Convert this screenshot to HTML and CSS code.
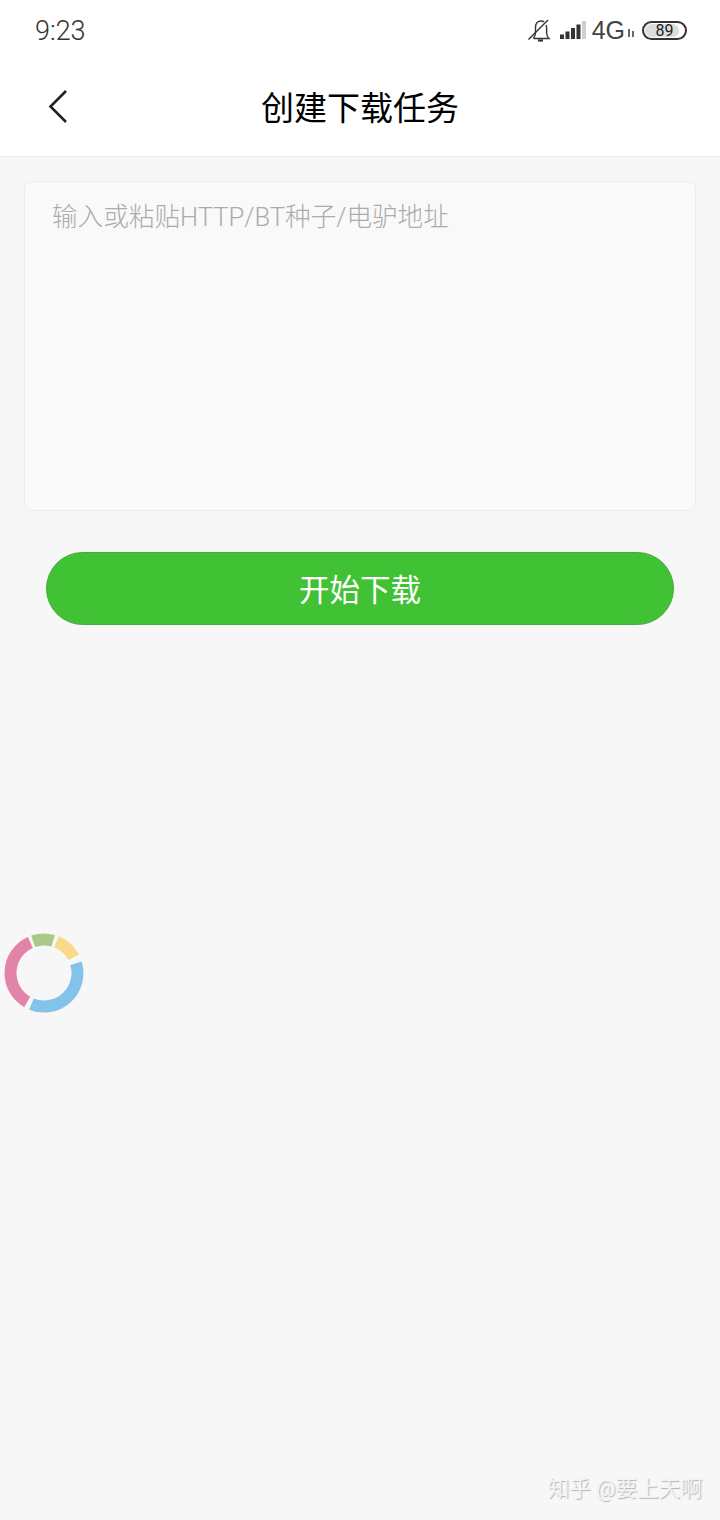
FILE: index.html
```html
<!DOCTYPE html>
<html lang="zh-CN">
<head>
  <meta charset="UTF-8" />
  <meta name="viewport" content="width=device-width, initial-scale=1.0"/>
  <title>创建下载任务</title>
  <link rel="stylesheet" href="styles.css">
</head>
<body>
  <div class="top">
    <!-- Status bar -->
    <div class="status-bar">
      <span class="clock">9:23</span>
      <div class="status-icons">
        <svg class="bell" width="26" height="24" viewBox="0 0 26 24" fill="none" stroke="#333" stroke-width="1.4">
          <path d="M6 20.500c1.800-1.500 2.500-3 2.500-6V9.500C8.500 5.500 10.500 3 14 3c1.200 0 2.200.3 3 .9M19 7c.5 1 .6 1.800.6 3v4.500c0 2.500.8 4.500 2.400 6H7"/>
          <path d="M1.500 21.500L21 2"/>
          <path d="M11 22.500h5" stroke-width="2.200"/>
        </svg>
        <svg class="signal" width="27" height="18" viewBox="0 0 27 18">
          <rect x="0" y="13.500" width="4" height="4.500" fill="#333"/>
          <rect x="5.500" y="10.500" width="4" height="7.500" fill="#333"/>
          <rect x="11" y="7" width="4" height="11" fill="#333"/>
          <rect x="16.500" y="3.500" width="4" height="14.500" fill="#333"/>
          <rect x="22" y="0" width="4" height="18" fill="#d0d0d0"/>
        </svg>
        <span class="network">4G</span>
        <svg class="arrows" width="8" height="10" viewBox="0 0 8 10" fill="none" stroke="#444" stroke-width="1.600">
          <path d="M2 1v8M6 3v6"/>
        </svg>
        <div class="battery"><div class="battery-fill"></div><span class="battery-num">89</span></div>
      </div>
    </div>

    <!-- Title bar -->
    <div class="title-bar">
      <svg class="back" width="24" height="36" viewBox="0 0 24 36" fill="none" stroke="#222" stroke-width="2.600">
        <path d="M20 3L4.500 18.500L20 34"/>
      </svg>
      <h1>创建下载任务</h1>
    </div>
  </div>

  <div class="content">
    <div class="url-box">
      <span class="placeholder">输入或粘贴HTTP/BT种子/电驴地址</span>
    </div>
    <button class="start-button"><span class="start-label">开始下载</span></button>
  </div>

  <!-- Floating ball -->
  <svg class="float-ring" width="88" height="88" viewBox="0 0 88 88" fill="none" stroke-width="12">
    <path stroke="#a9c98b" d="M33.100 12.300A33.500 33.500 0 0 1 53.200 11.800"/>
    <path stroke="#fbd98c" d="M56.500 12.900A33.500 33.500 0 0 1 73.600 28.300"/>
    <path stroke="#83c3ea" d="M76 34.200A33.500 33.500 0 0 1 31.400 75.100"/>
    <path stroke="#e184a8" d="M27.200 73A33.500 33.500 0 0 1 30.400 13.400"/>
  </svg>

  <div class="watermark">知乎 @要上天啊</div>
</body>
</html>
```

FILE: styles.css
```css
* {
  box-sizing: border-box;
}

body {
  font-family: 'Roboto', 'Noto Sans CJK SC', sans-serif;
  background-color: #f7f7f7;
  margin: 0;
  height: 1520px;
  position: relative;
  overflow: hidden;
}

.top {
  background-color: #fff;
  border-bottom: 1px solid #ebebeb;
  height: 157px;
}

.status-bar {
  height: 60px;
  display: flex;
  align-items: center;
  justify-content: space-between;
  padding: 0 33px 0 35px;
}

.clock {
  font-size: 27px;
  line-height: 30px;
  margin-top: 2px;
  font-weight: 300;
  color: #333;
}

.status-icons {
  display: flex;
  align-items: center;
}

.bell {
  margin-right: 7px;
}

.signal {
  margin-right: 5px;
}

.network {
  font-family: 'Liberation Sans', sans-serif;
  font-size: 25px;
  color: #444;
}

.arrows {
  margin: 6px 7px 0 2px;
}

.battery {
  width: 45px;
  height: 19px;
  border: 2px solid #333;
  border-radius: 10px;
  padding: 1px;
  position: relative;
}

.battery-fill {
  width: 88%;
  height: 100%;
  background-color: #ddd;
  border-radius: 7px;
}

.battery-num {
  position: absolute;
  top: 0;
  left: 0;
  width: 100%;
  line-height: 15px;
  text-align: center;
  font-size: 16px;
  color: #222;
}

.title-bar {
  height: 92px;
  display: flex;
  align-items: center;
  justify-content: center;
  position: relative;
}

.back {
  position: absolute;
  left: 46px;
  top: 28px;
}

h1 {
  margin: 0;
  font-size: 33px;
  font-weight: 400;
  color: #000;
}

.content {
  padding: 24px 24px 0;
  display: flex;
  flex-direction: column;
  align-items: center;
}

.url-box {
  width: 100%;
  height: 330px;
  background-color: #f9f9f9;
  border: 1px solid #ececec;
  border-radius: 8px;
  padding: 17px 27px;
}

.placeholder {
  font-size: 25.600px;
  line-height: 36px;
  font-weight: 300;
  color: #ababab;
}

.start-button {
  width: 628px;
  height: 73px;
  margin-top: 41px;
  padding: 0 0 2px;
  background-color: #40c234;
  border: 1px solid #4aa83f;
  border-radius: 37px;
  color: #fff;
  font-family: inherit;
  font-size: 30.500px;
}

.float-ring {
  position: absolute;
  left: 0;
  top: 929px;
  filter: blur(0.6px);
}

.watermark {
  position: absolute;
  right: 18px;
  top: 1473px;
  font-size: 21.600px;
  line-height: 32px;
  color: #f4f4f4;
  text-shadow: 1px 1px 1px #b5b5b5;
}
```
